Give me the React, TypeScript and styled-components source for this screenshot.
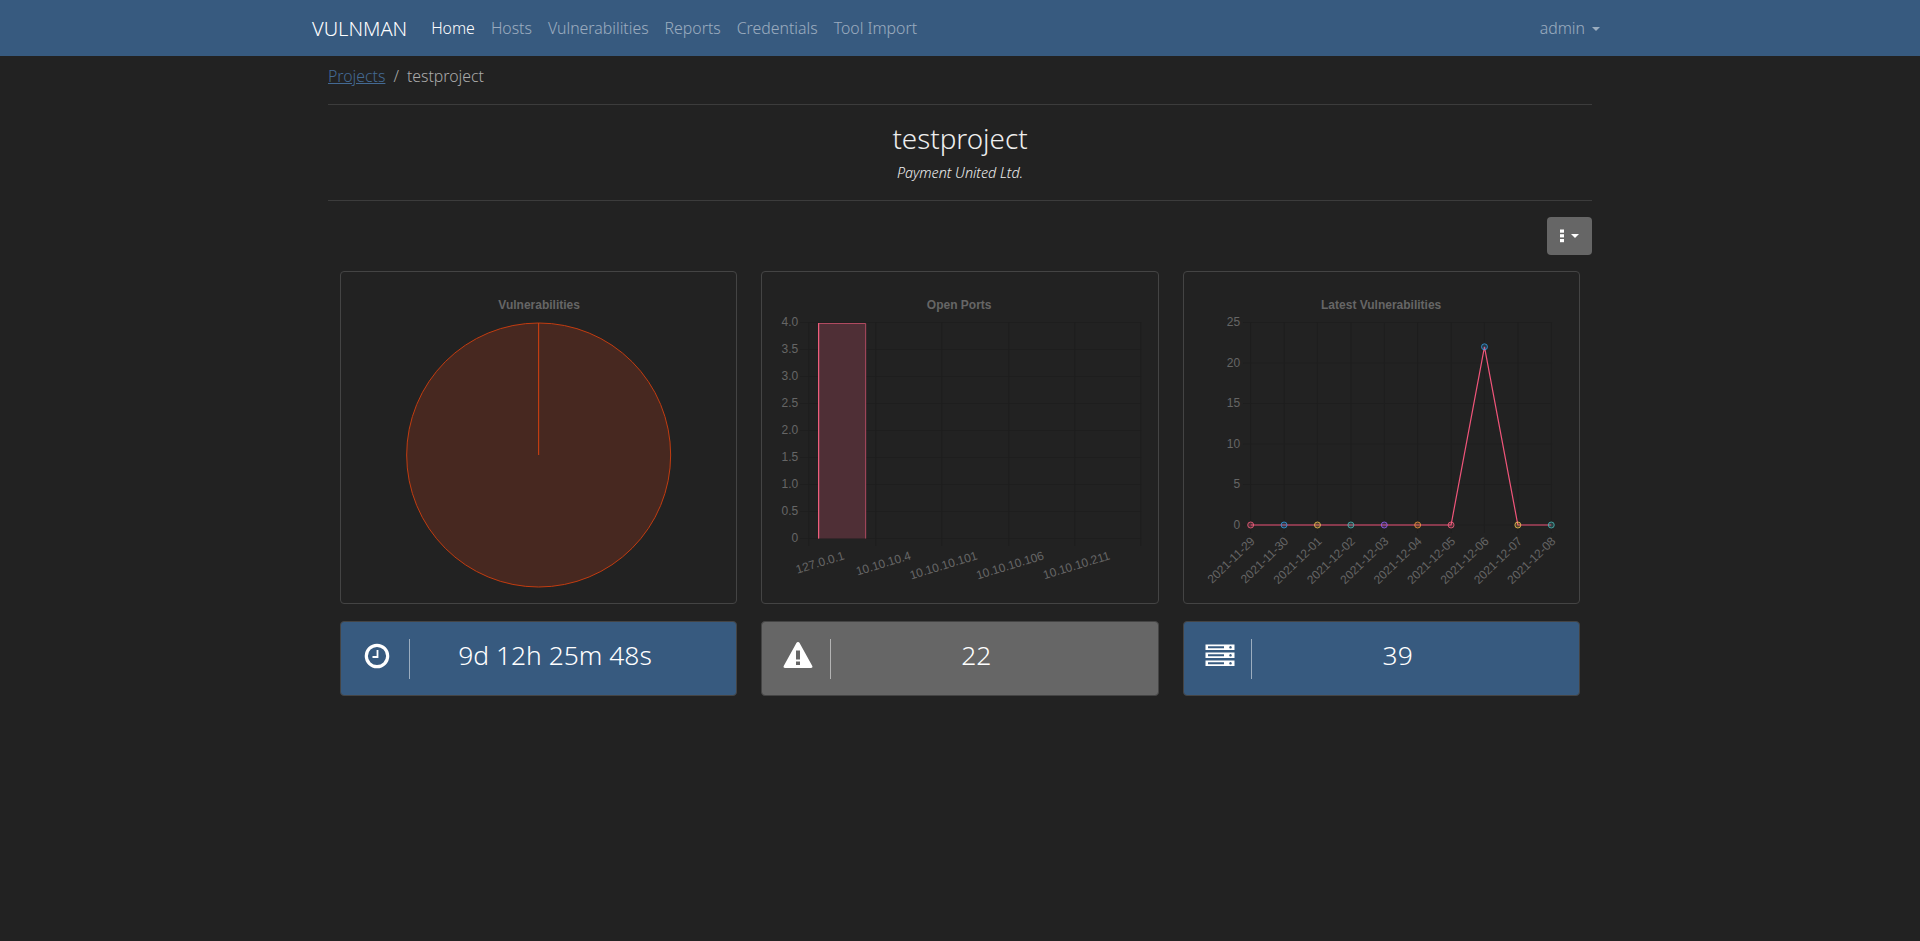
import React from "react";
import styled, { createGlobalStyle } from "styled-components";

const Global = createGlobalStyle`
  html, body { margin: 0; padding: 0; background: #222222; }
  body { font-family: "Noto Sans", "Open Sans", sans-serif; font-weight: 300; color: #fff; font-size: 15.85px; min-height: 941px; }
  * { box-sizing: border-box; }
`;

const NavBar = styled.nav`
  height: 56px;
  background: #375a7f;
  padding: 0 312px 0 312px;
  display: flex;
  align-items: center;
`;
const Brand = styled.a`
  font-size: 20px;
  color: #fff;
  margin-right: 16px;
`;
const NavList = styled.div`
  display: flex;
  flex: 1;
`;
const NavLink = styled.a<{ $active?: boolean }>`
  padding: 0 8px;
  color: ${(p) => (p.$active ? "#fff" : "rgba(255,255,255,.5)")};
  font-size: 15.85px;
`;
const Caret = styled.span`
  display: inline-block;
  margin-left: 7px;
  vertical-align: 3px;
  border-top: 4.5px solid currentColor;
  border-left: 4.5px solid transparent;
  border-right: 4.5px solid transparent;
`;
const Main = styled.main`
  width: 1264px;
  margin: 0 auto;
`;
const Crumbs = styled.div`
  height: 49px;
  display: flex;
  align-items: flex-start;
  padding-top: 9px;
  gap: 8px;
  color: #aaa;
  line-height: 22px;
  border-bottom: 1px solid #3c3c3c;
`;
const CrumbLink = styled.a`
  color: #446a94;
  text-decoration: underline;
`;
const Header = styled.header`
  height: 96px;
  text-align: center;
  border-bottom: 1px solid #3c3c3c;
  padding-top: 15px;
`;
const Title = styled.h2`
  margin: 0;
  font-size: 27.8px;
  font-weight: 300;
  line-height: 36px;
  color: #eee;
`;
const Subtitle = styled.p`
  margin: 7px 0 0;
  font-size: 14.3px;
  font-style: italic;
  line-height: 20px;
  color: #eee;
`;
const Toolbar = styled.div`
  display: flex;
  justify-content: flex-end;
  padding-top: 16px;
`;
const MenuButton = styled.button`
  width: 45px;
  height: 38px;
  background: #666;
  border: 0;
  border-radius: 4px;
  color: #fff;
  padding: 0;
  display: flex;
  align-items: center;
  justify-content: center;
  gap: 7px;
`;
const SmallCaret = styled.span`
  border-top: 4.5px solid #fff;
  border-left: 4.5px solid transparent;
  border-right: 4.5px solid transparent;
`;
const Grid = styled.section`
  display: grid;
  grid-template-columns: repeat(3, 1fr);
  margin-top: 16px;
`;
const Col = styled.div`
  padding: 0 12px;
  display: flex;
  flex-direction: column;
  gap: 17px;
`;
const ChartCard = styled.div`
  height: 333px;
  border: 1px solid #444;
  border-radius: 4px;
`;
const ChartSvg = styled.svg`
  display: block;
  width: 100%;
  height: 100%;
  font-family: "Liberation Sans", Arial, sans-serif;
  font-size: 12px;
  font-weight: 400;
`;
const Stat = styled.div<{ $bg: string }>`
  height: 75px;
  background: ${(p) => p.$bg};
  border: 1px solid #444;
  border-radius: 4px;
  display: flex;
  align-items: center;
`;
const StatIcon = styled.div`
  width: 68.7px;
  height: 40px;
  display: flex;
  align-items: center;
  justify-content: center;
  border-right: 1px solid rgba(255, 255, 255, 0.5);
  padding: 0 0 6px 4px;
  flex: none;
`;
const StatValue = styled.div`
  flex: 1;
  text-align: center;
  font-size: 26.4px;
  line-height: 40px;
  padding: 0 36px 8px 0;
`;

const Label = styled.text`
  fill: #666;
`;
const ChartTitle = styled.text`
  fill: #666;
  font-weight: 700;
  text-anchor: middle;
`;

const OX = 761;
const LX = 1183;
const TOP = 272;
const grid = "#1e1e1e";

const PieChart = () => (
  <ChartSvg viewBox="0 0 395 331">
    <ChartTitle x={198} y={37}>Vulnerabilities</ChartTitle>
    <g transform="translate(-341 -272)">
      <circle cx={538.5} cy={455} r={132} fill="#472820" stroke="#c23c10" strokeWidth={1} />
      <line x1={538.5} y1={323} x2={538.5} y2={455} stroke="#d9420f" strokeWidth={1} />
    </g>
  </ChartSvg>
);

const barY = [
  ["4.0", 0],
  ["3.5", 1],
  ["3.0", 2],
  ["2.5", 3],
  ["2.0", 4],
  ["1.5", 5],
  ["1.0", 6],
  ["0.5", 7],
  ["0", 8],
] as const;
const barX = [808.5, 875.5, 941.5, 1008.5, 1074.5, 1140.5];
const barLabels = ["127.0.0.1", "10.10.10.4", "10.10.10.101", "10.10.10.106", "10.10.10.211"];

const BarChart = () => (
  <ChartSvg viewBox="0 0 395 331">
    <g transform={`translate(${-OX - 1} ${-TOP})`}>
      <ChartTitle x={959} y={309}>Open Ports</ChartTitle>
      {barY.map(([t, i]) => {
        const y = 322.5 + i * 27;
        return (
          <g key={t}>
            <line x1={800} x2={1141} y1={y} y2={y} stroke={grid} />
            <Label x={798} y={y + 3.5} textAnchor="end">{t}</Label>
          </g>
        );
      })}
      {barX.map((x) => (
        <line key={x} x1={x} x2={x} y1={322} y2={546} stroke={grid} />
      ))}
      <rect x={818.5} y={323} width={47} height={215.5} fill="#4f2f36" />
      <path d="M818.5 538.5V323.5H865.5V538.5" fill="none" stroke="#b04a60" />
      <line x1={818.5} x2={818.5} y1={323} y2={538.5} stroke="#ff6384" />
      {barLabels.map((l, i) => (
        <Label key={l} textAnchor="end" transform={`translate(${(barX[i] + barX[i + 1]) / 2 + 3} 559) rotate(-17)`}>
          {l}
        </Label>
      ))}
    </g>
  </ChartSvg>
);

const lineY = ["25", "20", "15", "10", "5", "0"];
const dates = [
  "2021-11-29", "2021-11-30", "2021-12-01", "2021-12-02", "2021-12-03",
  "2021-12-04", "2021-12-05", "2021-12-06", "2021-12-07", "2021-12-08",
];
const pointColors = ["#ff6384", "#36a2eb", "#ffce56", "#4bc0c0", "#9966ff", "#ff9f40"];
const lineX = (i: number) => 1250.5 + i * 33.4;
const lineVals = [0, 0, 0, 0, 0, 0, 0, 22, 0, 0];
const valY = (v: number) => 525 - (v * 202.5) / 25;

const LineChart = () => (
  <ChartSvg viewBox="0 0 395 331">
    <g transform={`translate(${-LX - 1} ${-TOP})`}>
      <ChartTitle x={1381} y={309}>Latest Vulnerabilities</ChartTitle>
      {lineY.map((t, i) => {
        const y = 322.5 + i * 40.5;
        return (
          <g key={t}>
            <line x1={1243} x2={1552} y1={y} y2={y} stroke={grid} />
            <Label x={1240} y={y + 3.5} textAnchor="end">{t}</Label>
          </g>
        );
      })}
      {dates.map((d, i) => (
        <g key={d}>
          <line x1={lineX(i)} x2={lineX(i)} y1={322} y2={533} stroke={grid} />
          <Label textAnchor="end" transform={`translate(${lineX(i) + 5} 542) rotate(-44)`}>{d}</Label>
        </g>
      ))}
      <polyline
        points={lineVals.map((v, i) => `${lineX(i)},${valY(v)}`).join(" ")}
        fill="none"
        stroke="#f0557a"
        strokeWidth={1.2}
      />
      {lineVals.map((v, i) => {
        const c = pointColors[i % 6];
        return <circle key={i} cx={lineX(i)} cy={valY(v)} r={3} fill={c} fillOpacity={0.2} stroke={c} strokeOpacity={0.75} />;
      })}
    </g>
  </ChartSvg>
);

const ClockIcon = () => (
  <svg width="26" height="26" viewBox="0 0 26 26" fill="none">
    <circle cx="13" cy="13" r="10.7" stroke="#fff" strokeWidth="3.2" />
    <path d="M13.5 7v7H8.5" stroke="#fff" strokeWidth="1.8" />
  </svg>
);
const WarnIcon = () => (
  <svg width="30" height="28" viewBox="0 1 30 28">
    <path fillRule="evenodd" fill="#fff" d="M15 1c.7 0 1.3.4 1.6 1l12.7 23c.5 1-.2 2-1.3 2H2c-1.100 0-1.800-1-1.300-2L13.400 2c.3-.6.900-1 1.600-1ZM13 9.500v9h4v-9Zm0 11v3.500h4v-3.500Z" />
  </svg>
);
const ServerIcon = () => (
  <svg width="30" height="23" viewBox="0 0 30 23">
    {[0, 8, 16].map((y) => (
      <path key={y} fillRule="evenodd" fill="#fff" d={`M.5 ${y + 0.5}H29.500v5.500H.5ZM3 ${y + 2.3}v2h16v-2ZM25.500 ${y + 2}a1.300 1.300 0 1 0 .01 0Z`} />
    ))}
  </svg>
);
const DotsIcon = () => (
  <svg width="4" height="14" viewBox="0 0 4 14" fill="#fff">
    <rect y="0.5" width="4" height="3.2" />
    <rect y="5.2" width="4" height="3.2" />
    <rect y="10" width="4" height="3.2" />
  </svg>
);

export default function App() {
  return (
    <>
      <Global />
      <NavBar>
        <Brand>VULNMAN</Brand>
        <NavList>
          <NavLink $active>Home</NavLink>
          <NavLink>Hosts</NavLink>
          <NavLink>Vulnerabilities</NavLink>
          <NavLink>Reports</NavLink>
          <NavLink>Credentials</NavLink>
          <NavLink>Tool Import</NavLink>
        </NavList>
        <NavLink>admin<Caret /></NavLink>
      </NavBar>
      <Main>
        <Crumbs>
          <CrumbLink>Projects</CrumbLink>
          <span>/</span>
          <span>testproject</span>
        </Crumbs>
        <Header>
          <Title>testproject</Title>
          <Subtitle>Payment United Ltd.</Subtitle>
        </Header>
        <Toolbar>
          <MenuButton aria-label="menu"><DotsIcon /><SmallCaret /></MenuButton>
        </Toolbar>
        <Grid>
          <Col>
            <ChartCard><PieChart /></ChartCard>
            <Stat $bg="#375a7f"><StatIcon><ClockIcon /></StatIcon><StatValue>9d 12h 25m 48s</StatValue></Stat>
          </Col>
          <Col>
            <ChartCard><BarChart /></ChartCard>
            <Stat $bg="#666666"><StatIcon><WarnIcon /></StatIcon><StatValue>22</StatValue></Stat>
          </Col>
          <Col>
            <ChartCard><LineChart /></ChartCard>
            <Stat $bg="#375a7f"><StatIcon><ServerIcon /></StatIcon><StatValue>39</StatValue></Stat>
          </Col>
        </Grid>
      </Main>
    </>
  );
}
